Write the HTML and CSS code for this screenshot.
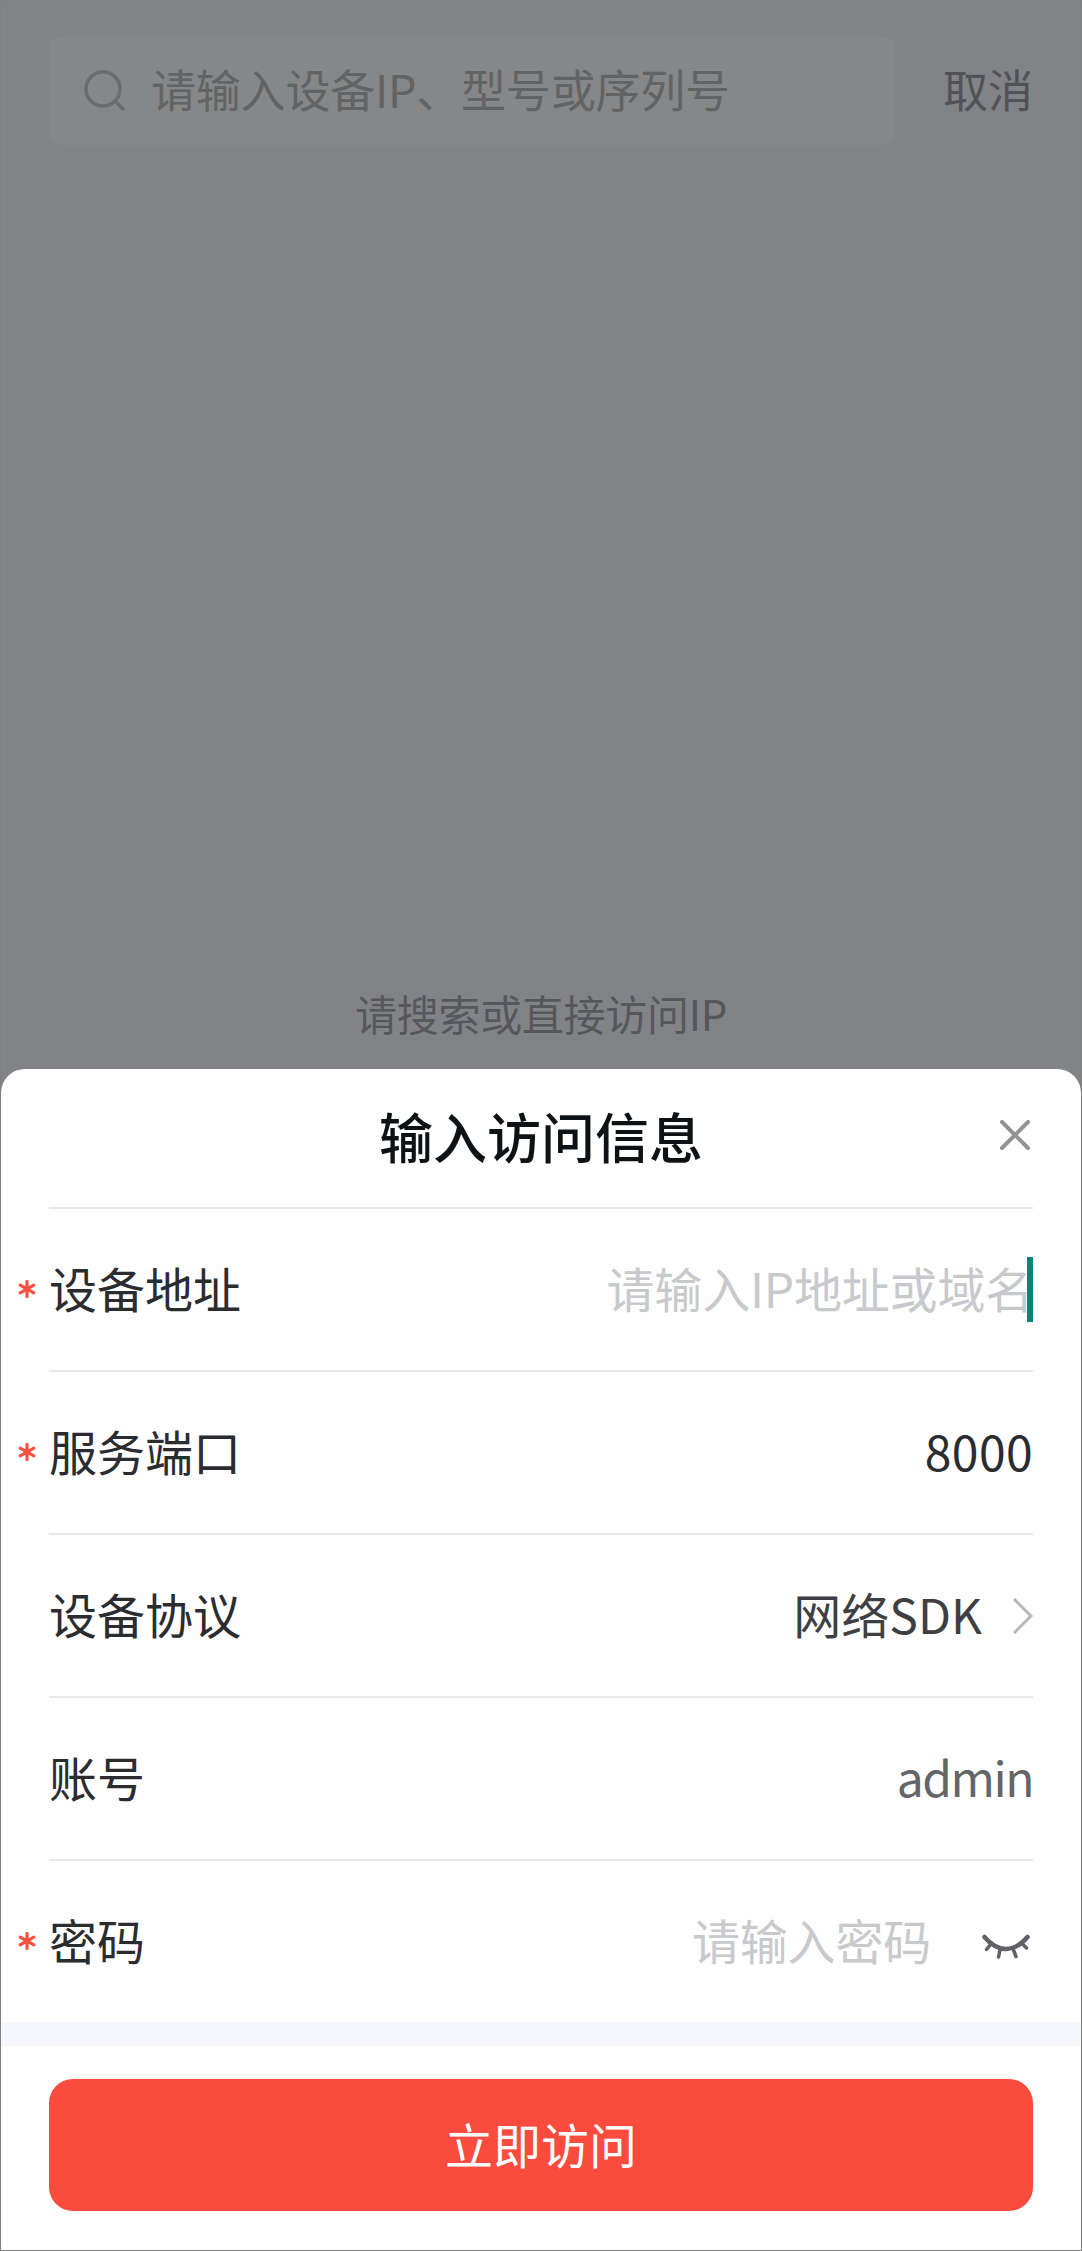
FILE: index.html
```html
<!DOCTYPE html>
<html lang="zh-CN">
<head>
  <meta charset="UTF-8">
  <meta name="viewport" content="width=device-width, initial-scale=1.0">
  <title>输入访问信息</title>
  <link rel="stylesheet" href="styles.css">
</head>
<body>

  <!-- Search page behind the sheet -->
  <div class="search-page">
    <div class="search-header">
      <div class="search-box">
        <svg class="search-icon" viewBox="0 0 42 42">
          <circle cx="19" cy="19" r="17"/>
          <path d="M31 31L40 40"/>
        </svg>
        <span class="search-text">请输入设备IP、型号或序列号</span>
      </div>
      <div class="cancel">取消</div>
    </div>
    <div class="empty-hint">请搜索或直接访问IP</div>
  </div>

  <!-- Bottom sheet -->
  <div class="sheet">
    <div class="sheet-header">
      <div class="sheet-title">输入访问信息</div>
      <svg class="close-icon" viewBox="0 0 30 30">
        <path d="M2 2L28 28M28 2L2 28"/>
      </svg>
    </div>

    <div class="divider"></div>
    <div class="row">
      <div class="star"><svg viewBox="0 0 18 18"><path d="M9 1.5V16.5M2.2 5.2L15.8 12.8M15.8 5.2L2.2 12.8"/></svg></div>
      <div class="label">设备地址</div>
      <div class="value placeholder">请输入IP地址或域名<span class="cursor"></span></div>
    </div>

    <div class="divider"></div>
    <div class="row">
      <div class="star"><svg viewBox="0 0 18 18"><path d="M9 1.5V16.5M2.2 5.2L15.8 12.8M15.8 5.2L2.2 12.8"/></svg></div>
      <div class="label">服务端口</div>
      <div class="value port">8000</div>
    </div>

    <div class="divider"></div>
    <div class="row">
      <div class="star"></div>
      <div class="label">设备协议</div>
      <div class="value protocol">网络SDK</div>
      <svg class="arrow-icon" viewBox="0 0 20 36">
        <path d="M1 1L18 18L1 35"/>
      </svg>
    </div>

    <div class="divider"></div>
    <div class="row">
      <div class="star"></div>
      <div class="label">账号</div>
      <div class="value account">admin</div>
    </div>

    <div class="divider"></div>
    <div class="row">
      <div class="star"><svg viewBox="0 0 18 18"><path d="M9 1.5V16.5M2.2 5.2L15.8 12.8M15.8 5.2L2.2 12.8"/></svg></div>
      <div class="label">密码</div>
      <div class="value placeholder">请输入密码</div>
      <svg class="eye-icon" viewBox="0 0 48 26">
        <path class="lid" d="M2.5 3C16 19 32 19 45.500 3"/>
        <path class="lashes" d="M9 10L4.500 15.500M18 16L16.500 23M31.500 16L34 22.500M40 9.500L44.500 14"/>
      </svg>
    </div>

    <div class="footer">
      <button class="visit-button">立即访问</button>
    </div>
  </div>

</body>
</html>
```
FILE: styles.css
```css
* {
  margin: 0;
  padding: 0;
  box-sizing: border-box;
}
body {
  font-family: 'Noto Sans CJK SC', sans-serif;
  display: flex;
  flex-direction: column;
  height: 2251px;
  border: 1px solid #80817f;
  background-color: #828387;
}
svg {
  display: block;
  fill: none;
  flex-shrink: 0;
}

/* Search page */
.search-page {
  height: 1068px;
  display: flex;
  flex-direction: column;
  justify-content: space-between;
}
.search-header {
  display: flex;
  align-items: center;
  justify-content: space-between;
  padding: 36px 48px 0 48px;
  font-size: 45px;
  line-height: 66px;
}
.search-box {
  display: flex;
  align-items: center;
  gap: 25px;
  width: 846px;
  height: 108px;
  padding-left: 35px;
  border-radius: 12px;
  background-color: #868788;
  color: #626364;
}
.search-icon {
  width: 42px;
  height: 42px;
  stroke: #6b6c6d;
  stroke-width: 3.5;
}
.search-text {
  padding-bottom: 5px;
  letter-spacing: -0.2px;
}
.cancel {
  padding-bottom: 5px;
  color: #505256;
}
.empty-hint {
  padding-bottom: 26px;
  font-size: 42px;
  line-height: 60px;
  letter-spacing: -0.3px;
  text-align: center;
  color: #56575b;
}

/* Bottom sheet */
.sheet {
  flex: 1;
  border-radius: 24px 24px 0 0;
  background-color: #fefefe;
}
.sheet-header {
  display: grid;
  grid-template-columns: 1fr auto 1fr;
  align-items: center;
  height: 138px;
  padding: 0 51px;
}
.sheet-title {
  grid-column: 2;
  padding-bottom: 4px;
  font-size: 54px;
  font-weight: 500;
  line-height: 80px;
  color: #0f1215;
}
.close-icon {
  justify-self: end;
  width: 30px;
  height: 30px;
  margin-bottom: 7px;
  stroke: #929394;
  stroke-width: 4;
  stroke-linecap: round;
}
.divider {
  height: 2px;
  margin: 0 48px;
  background-color: #e8e9ed;
}
.row {
  display: flex;
  align-items: center;
  height: 161px;
  padding: 0 48px 0 17px;
  font-size: 48px;
  line-height: 72px;
  color: #2a2c30;
}
.star {
  width: 31px;
  padding-bottom: 2px;
}
.star svg {
  width: 18px;
  height: 18px;
  stroke: #f9503f;
  stroke-width: 3.2;
  stroke-linecap: round;
}
.label {
  padding-bottom: 5px;
}
.value {
  position: relative;
  margin-left: auto;
  padding-bottom: 5px;
}
.placeholder {
  letter-spacing: -0.2px;
  color: #c8c9cc;
}
.cursor {
  position: absolute;
  right: 0;
  top: 6px;
  width: 6px;
  height: 65px;
  background-color: #058577;
}
.port {
  letter-spacing: 0.4px;
}
.protocol {
  color: #3e3f43;
}
.account {
  letter-spacing: -1.5px;
  color: #646569;
}
.arrow-icon {
  width: 20px;
  height: 36px;
  margin-left: 31px;
  stroke: #b6b7b8;
  stroke-width: 3;
}
.eye-icon {
  width: 48px;
  height: 26px;
  margin: 10px 3px 0 51px;
  stroke: #606268;
  stroke-linecap: round;
}
.lid {
  stroke-width: 4.5;
}
.lashes {
  stroke-width: 3.5;
}
.footer {
  padding: 33px 48px 0;
  border-top: 24px solid #f5f6fb;
}
.visit-button {
  display: block;
  width: 100%;
  height: 132px;
  padding-bottom: 5px;
  border: none;
  border-radius: 24px;
  background-color: #f94c3e;
  color: #fff;
  font-family: inherit;
  font-size: 48px;
}
```
